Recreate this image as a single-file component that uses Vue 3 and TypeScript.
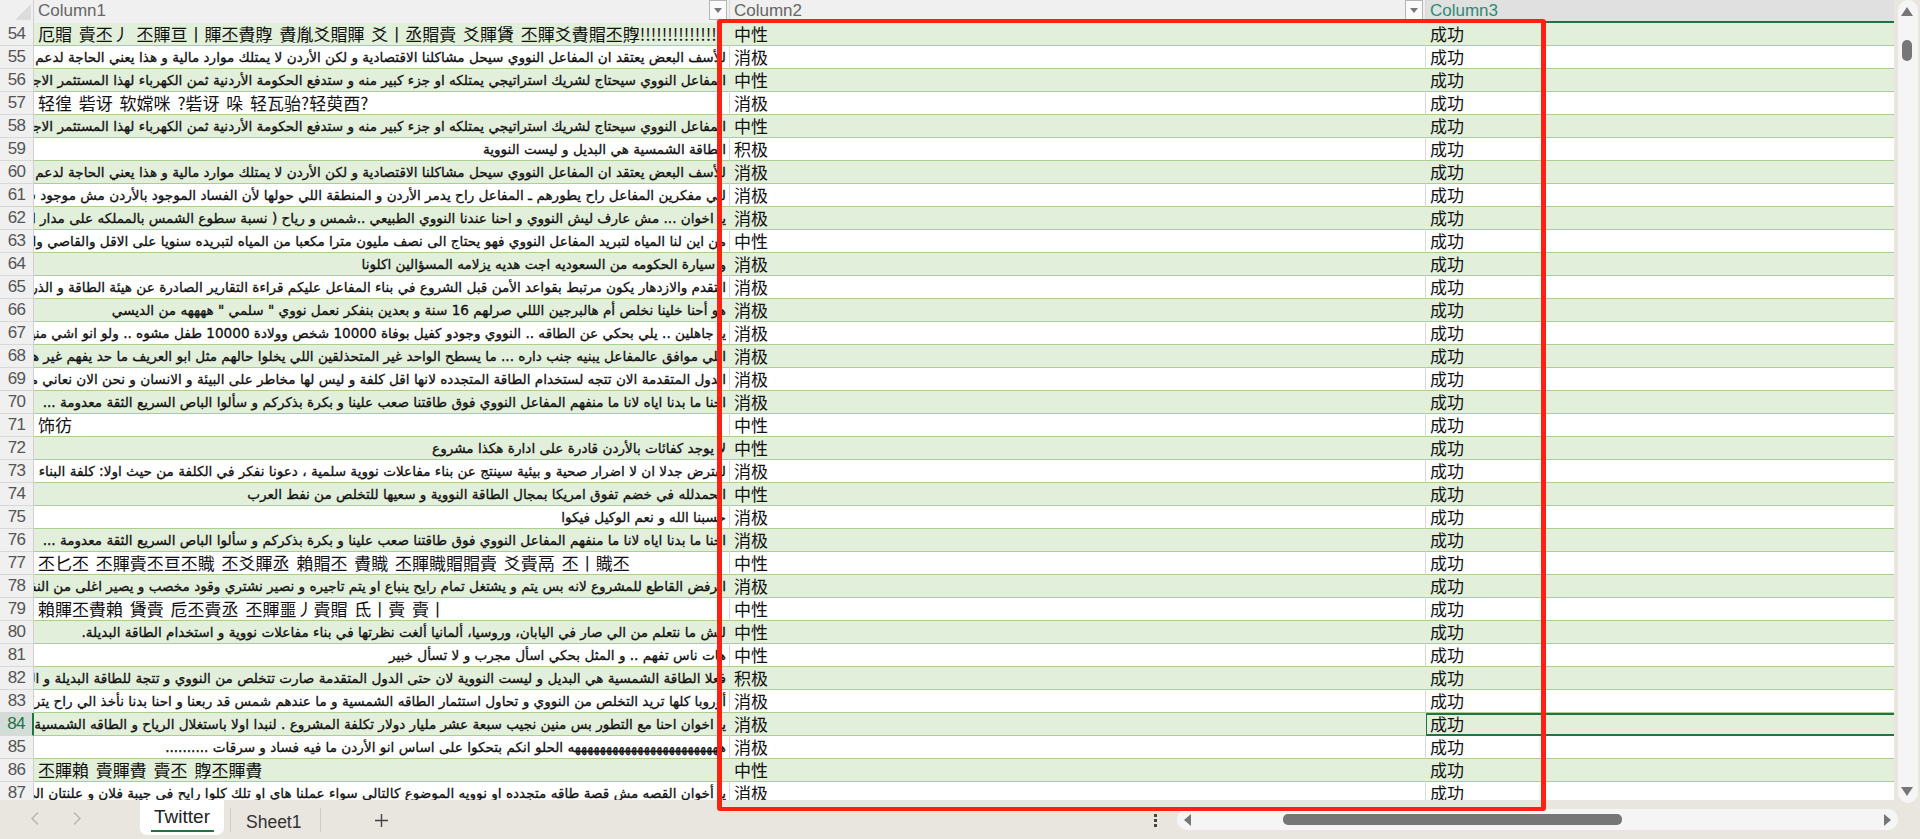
<script setup lang="ts">
interface Row { n: number; text: string; cjk: boolean; tone: string }
const ar = {
  a: 'للأسف البعض يعتقد ان المفاعل النووي سيحل مشاكلنا الاقتصادية و لكن الأردن لا يمتلك موارد مالية و هذا يعني الحاجة لدعم مالي كبير جدا',
  b: 'المفاعل النووي سيحتاج لشريك استراتيجي يمتلكه او جزء كبير منه و ستدفع الحكومة الأردنية ثمن الكهرباء لهذا المستثمر الاجنبي لعشرات السنين',
  c: 'احنا ما بدنا اياه لانا ما منفهم المفاعل النووي فوق طاقتنا صعب علينا و بكرة بذكركم و سألوا الباص السريع الثقة معدومة ...',
}
const raw: [string, boolean, string][] = [
  ['厄賵 賷丕丿 丕賱亘丨賱丕賮賯 賮胤爻賵賱 爻丨丞賵賷 爻賱賲 丕賱爻賮賵丕賯!!!!!!!!!!!!!!!', true, '中性'],
  [ar.a, false, '消极'],
  [ar.b, false, '中性'],
  ['轻徨 砦讶 软嫦咪 ?砦讶 哚 轻瓦骀?轻萸酉?', true, '消极'],
  [ar.b, false, '中性'],
  ['الطاقة الشمسية هي البديل و ليست النووية', false, '积极'],
  [ar.a, false, '消极'],
  ['للي مفكرين المفاعل راح يطورهم ـ المفاعل راح يدمر الأردن و المنطقة اللي حولها لأن الفساد الموجود بالأردن مش موجود في أي مكان', false, '消极'],
  ['يا اخوان ... مش عارف ليش النووي و احنا عندنا النووي الطبيعي ..شمس و رياح ( نسبة سطوع الشمس بالمملكه على مدار السنة عالية جدا', false, '消极'],
  ['من اين لنا المياه لتبريد المفاعل النووي فهو يحتاج الى نصف مليون مترا مكعبا من المياه لتبريده سنويا على الاقل والقاصي والداني', false, '中性'],
  ['و سيارة الحكومه من السعوديه اجت هديه يزلامه المسؤالين اكلونا', false, '消极'],
  ['التقدم والازدهار يكون مرتبط بقواعد الأمن قبل الشروع في بناء المفاعل عليكم قراءة التقارير الصادرة عن هيئة الطاقة و الذرية الدولية', false, '消极'],
  ['هو أحنا خلينا نخلص أم هالبرجين الللي صرلهم 16 سنة و بعدين بنفكر نعمل نووي " سلمي " ههههه من الديسي', false, '消极'],
  ['يا جاهلين .. يلي بحكي عن الطاقه .. النووي وجودو كفيل بوفاة 10000 شخص وولادة 10000 طفل مشوه .. ولو انو اشي منيح كان عملوه', false, '消极'],
  ['اللي موافق عالمفاعل يبنيه جنب داره ... ما يسطح الواحد غير المتحذلقين اللي يخلوا حالهم مثل ابو العريف ما حد يفهم غير هم في البلد', false, '消极'],
  ['الدول المتقدمة الان تتجه لستخدام الطاقة المتجدده لانها اقل كلفة و ليس لها مخاطر على البيئة و الانسان و نحن الان نعاني من هذا كله', false, '消极'],
  [ar.c, false, '消极'],
  ['饰彷', true, '中性'],
  ['لا يوجد كفائات بالأردن قادرة على ادارة هكذا مشروع', false, '中性'],
  ['لفترض جدلا ان لا اضرار صحية و بيئية سينتج عن بناء مفاعلات نووية سلمية ، دعونا نفكر في الكلفة من حيث اولا: كلفة البناء نفسها', false, '消极'],
  ['الحمدلله في خضم تفوق امريكا بمجال الطاقة النووية و سعيها للتخلص من نفط العرب', false, '中性'],
  ['حسبنا الله و نعم الوكيل فيكوا', false, '消极'],
  [ar.c, false, '消极'],
  ['丕匕丕 丕賱賷丕亘丕賳 丕爻賱丞 賴賵丕 賮賳 丕賱賳賵賵賷 爻賷鬲 丕丨賳丕', true, '中性'],
  ['الرفض القاطع للمشروع لانه بس يتم و يشتغل تمام رايح ينباع او يتم تاجيره و نصير نشتري وقود مخصب و يصير اغلى من النفط و الغاز', false, '消极'],
  ['賴賱丕賮賴 賲賷 卮丕賷丞 丕賱噩丿賷賵 氐丨賷 賷丨', true, '中性'],
  ['ليش ما نتعلم من الي صار في اليابان، وروسيا، ألمانيا ألغت نظرتها في بناء مفاعلات نووية و استخدام الطاقة البديلة.', false, '中性'],
  ['هات ناس تفهم .. و المثل بحكي اسأل مجرب و لا تسأل خبير', false, '中性'],
  ['فعلا الطاقة الشمسية هي البديل و ليست النووية لان حتى الدول المتقدمة صارت تتخلص من النووي و تتجة للطاقة البديلة و المتجددة كلها', false, '积极'],
  ['أوروبا كلها تريد التخلص من النووي و تحاول استثمار الطاقه الشمسية و ما عندهم شمس قد ربعنا و احنا بدنا نأخذ الي راح يتركوه هم', false, '消极'],
  ['يا اخوان احنا مع التطور بس منين نجيب سبعة عشر مليار دولار تكلفة المشروع . لنبدا اولا باستغلال الرياح و الطاقه الشمسية و غيرها', false, '消极'],
  ['ههههههههههههههههههههههههه الحلو انكم بتحكوا على اساس انو الأردن ما فيه فساد و سرقات ..........', false, '消极'],
  ['丕賱賴 賷賱賮 賷丕 賯丕賱賮', true, '中性'],
  ['يا أخوان القصه مش قصة طاقه متجدده او نوويه الموضوع كالتالي سواء عملنا هاي او تلك كلوا رايح في جيبة فلان و علنتان الى الابد', false, '消极'],
]
const rows: Row[] = raw.map((r, i) => ({ n: 54 + i, text: r[0], cjk: r[1], tone: r[2] }))
</script>

<template>
  <div class="app">
    <div class="main">
      <div class="sheet">
        <div class="head">
          <div class="corner"><span class="tri"></span></div>
          <div class="hc c1">Column1<span class="fb"><i></i></span></div>
          <div class="hc c2">Column2<span class="fb"><i></i></span></div>
          <div class="hc c3 active">Column3</div>
        </div>
        <div class="body">
          <div v-for="r in rows" :key="r.n" class="row" :class="{ odd: r.n % 2 === 0, sel: r.n === 84 }">
            <div class="num">{{ r.n }}</div>
            <div class="cell c1" :class="r.cjk ? 'zh' : 'arb'">{{ r.text }}</div>
            <div class="cell c2 zh">{{ r.tone }}</div>
            <div class="cell c3 zh">成功</div>
          </div>
        </div>
      </div>
      <div class="vbar">
        <svg class="up" width="12" height="9" viewBox="0 0 12 9"><path d="M6 0 L12 9 H0 Z" fill="#767676" /></svg>
        <div class="vthumb"></div>
        <svg class="down" width="12" height="9" viewBox="0 0 12 9"><path d="M0 0 H12 L6 9 Z" fill="#767676" /></svg>
      </div>
    </div>
    <div class="tabs">
      <div class="nav">
        <svg width="8" height="13" viewBox="0 0 8 13"><path d="M7 0.5 L1 6.5 L7 12.5" fill="none" stroke="#b5b3b0" stroke-width="1.3" /></svg>
        <svg width="8" height="13" viewBox="0 0 8 13"><path d="M1 0.5 L7 6.5 L1 12.5" fill="none" stroke="#b5b3b0" stroke-width="1.3" /></svg>
      </div>
      <div class="tab on">Twitter</div>
      <div class="sep"></div>
      <div class="tab off">Sheet1</div>
      <div class="sep"></div>
      <svg class="plus" width="15" height="15" viewBox="0 0 15 15"><path d="M7.5 1 V14 M1 7.5 H14" stroke="#444" stroke-width="1.4" /></svg>
      <div class="dots"><i></i><i></i><i></i></div>
      <div class="hbar">
        <svg width="8" height="12" viewBox="0 0 8 12"><path d="M7 0 V12 L0 6 Z" fill="#767676" /></svg>
        <div class="hthumb"></div>
        <svg width="8" height="12" viewBox="0 0 8 12"><path d="M1 0 V12 L8 6 Z" fill="#767676" /></svg>
      </div>
    </div>
    <div class="redbox"></div>
  </div>
</template>

<style>
html, body { margin: 0; padding: 0; overflow: hidden; background: #e9e5df; }
</style>

<style scoped>
.app { position: relative; width: 1920px; height: 839px; overflow: hidden; background: #e9e5df; font-family: "Liberation Sans", sans-serif; }
.main { display: flex; height: 800px; align-items: flex-start; }
.sheet { width: 1894px; height: 800px; overflow: hidden; background: #fff; }
.head { display: flex; height: 23px; background: #f0f0f0; }
.corner { width: 34px; position: relative; border-right: 1px solid #d0d0d0; box-sizing: border-box; }
.tri { position: absolute; right: 2px; bottom: 3px; border-style: solid; border-width: 0 0 16px 16px; border-color: transparent transparent #dcdcdc transparent; }
.hc { position: relative; height: 23px; font-size: 17px; line-height: 22px; color: #666; padding-left: 4px; box-sizing: border-box; border-right: 1px solid #d8d8d8; white-space: nowrap; overflow: hidden; }
.c1 { width: 696px; }
.c2 { width: 696px; }
.c3 { flex: 1; min-width: 0; }
.hc.active { background: #e0e0e0; color: #2f8a74; border-bottom: 2px solid #217346; border-right: 0; }
.fb { position: absolute; right: 2px; top: 0; width: 18px; height: 20px; background: #fafafa; border: 1px solid #b5b5b5; box-sizing: border-box; display: flex; align-items: center; justify-content: center; }
.fb i { display: block; width: 0; height: 0; border-left: 4px solid transparent; border-right: 4px solid transparent; border-top: 5px solid #777; }
.body { height: 777px; overflow: hidden; }
.row { display: flex; height: 23px; }
.num { width: 34px; flex: none; box-sizing: border-box; background: #f0f0f0; color: #555; font-size: 17px; line-height: 22px; text-align: center; letter-spacing: -0.6px; border-bottom: 1px solid #d8d8d8; border-right: 1px solid #d0d0d0; }
.cell { height: 23px; box-sizing: border-box; border-bottom: 1px solid #a9d08e; border-right: 1px solid #d8d8d8; background: #fff; color: #111; overflow: hidden; white-space: nowrap; flex: none; }
.row.odd .cell { background: #e2efda; border-right-color: #e2efda; }
.cell.c3 { flex: 1; border-right: 0; }
.zh { font-family: "Noto Sans CJK SC", sans-serif; font-size: 17px; padding-left: 4px; line-height: 22px; word-spacing: 3px; }
.arb { font-family: "DejaVu Sans", sans-serif; font-size: 13.6px; line-height: 22px; direction: rtl; text-align: right; padding-right: 3px; -webkit-text-stroke: 0.3px #111; }
.row.sel .num { background: #d3dcd6; color: #217346; border-right: 2px solid #217346; }
.row.sel .cell.c3 { border: 0; box-shadow: inset 1px 0 #217346, inset 0 2px #217346, inset 0 -2px #217346; }
.vbar { width: 20px; margin-left: 4px; height: 803px; flex: none; background: #f5f5f5; border-radius: 10px; position: relative; }
.up { position: absolute; left: 3px; top: 7px; }
.down { position: absolute; left: 3px; top: 787px; }
.vthumb { position: absolute; left: 4px; top: 40px; width: 10px; height: 21px; border-radius: 5px; background: #767676; }
.tabs { height: 39px; display: flex; align-items: flex-start; padding-left: 31px; }
.nav { width: 50px; margin-top: 12px; flex: none; display: flex; justify-content: space-between; }
.tab { flex: none; white-space: nowrap; }
.tab.on { position: relative; margin-left: 59px; width: 84px; height: 35px; font-size: 19px; line-height: 33px; text-align: center; background: #fff; border-radius: 0 0 7px 7px; color: #222; }
.tab.on::after { content: ""; position: absolute; left: 11px; right: 10px; bottom: 3px; height: 2px; background: #217346; }
.tab.off { margin-left: 15px; width: 56px; font-size: 17.5px; line-height: 24px; margin-top: 10px; color: #333; }
.sep { flex: none; width: 1px; height: 24px; margin-left: 6px; margin-top: 8px; background: #cfcbc6; }
.tab.off + .sep { margin-left: 18px; }
.plus { flex: none; margin-left: 53px; margin-top: 13px; }
.dots { flex: none; margin-left: 765px; margin-top: 14px; display: flex; flex-direction: column; gap: 2px; }
.dots i { display: block; width: 3px; height: 3px; background: #444; }
.hbar { position: relative; flex: none; margin-left: 20px; margin-top: 9px; width: 721px; height: 21px; border-radius: 10px; background: #f5f5f5; display: flex; align-items: center; justify-content: space-between; padding: 0 7px; box-sizing: border-box; }
.hthumb { position: absolute; left: 106px; top: 5px; width: 339px; height: 11px; border-radius: 5px; background: #767676; }
.redbox { position: absolute; left: 717px; top: 19px; width: 829px; height: 792px; box-sizing: border-box; border: 4px solid #ff2015; border-left-width: 5px; border-right-width: 5px; border-radius: 3px; pointer-events: none; }
</style>
